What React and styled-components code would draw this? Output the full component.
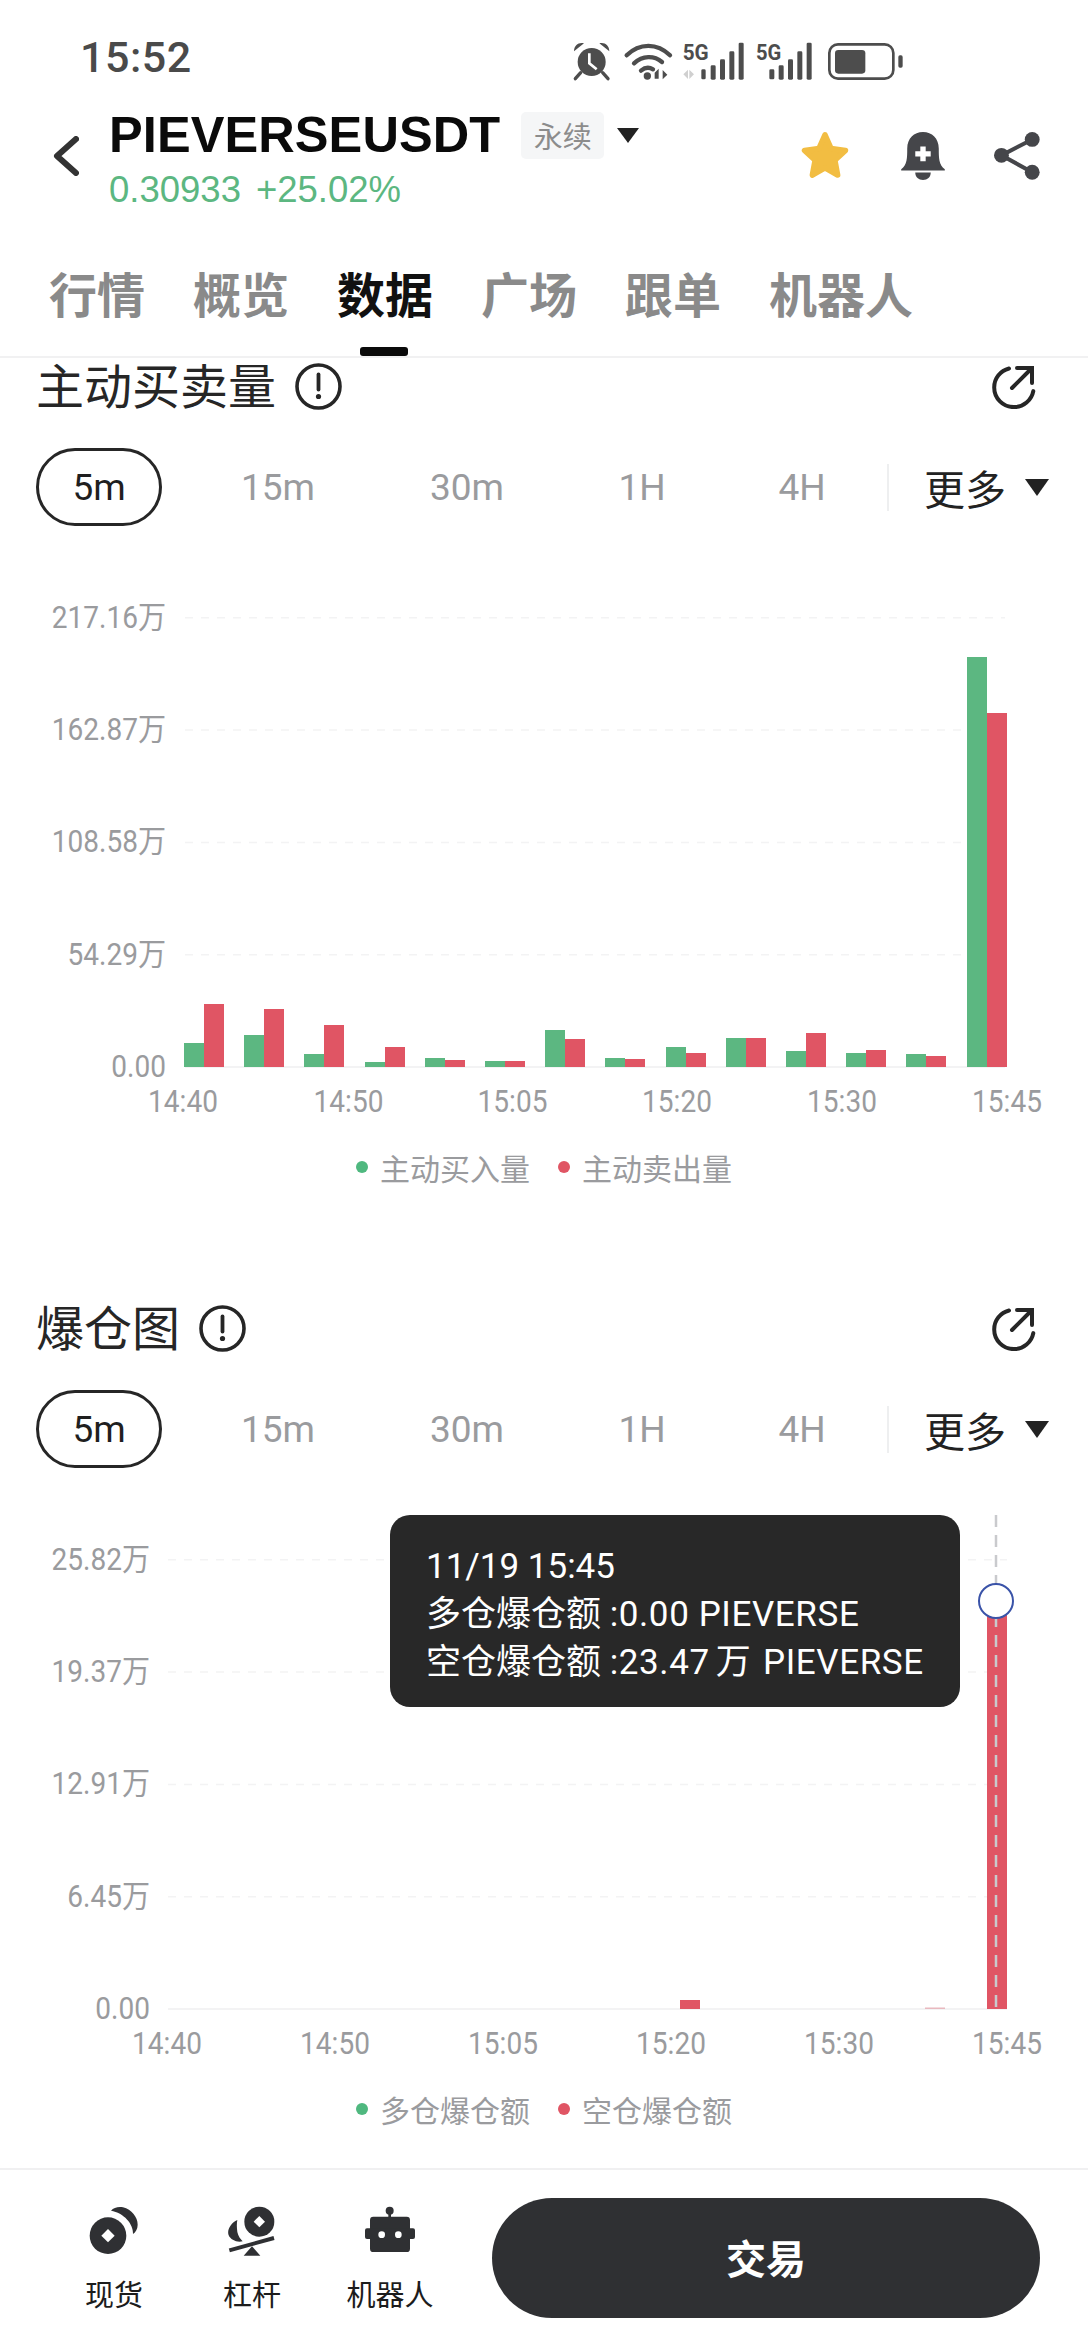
import React from 'react';
import styled, { createGlobalStyle } from 'styled-components';

const GREEN = '#5cb781';
const RED = '#e05564';
const LATIN = 'Roboto, "Noto Sans CJK SC", sans-serif';

const Global = createGlobalStyle`
  html, body { margin: 0; padding: 0; background: #fff; }
  body { font-family: ${LATIN}; }
  * { box-sizing: border-box; }
`;

const Page = styled.div`
  width: 1088px; height: 2348px; display: flex; flex-direction: column;
  overflow: hidden; background: #fff; color: #222;
`;

const StatusBar = styled.div`
  height: 112px; flex: none; display: flex; align-items: center; justify-content: space-between;
  padding: 0 148px 0 80px;
`;
const Clock = styled.span`
  font: 500 43px/1 Roboto, sans-serif; color: #4a4a4a; letter-spacing: 0.5px; padding-top: 2px;
`;

const Header = styled.div`
  height: 128px; flex: none; display: flex; align-items: flex-start; padding: 0 48px 0 53px;
`;
const BackWrap = styled.div`
  width: 56px; height: 88px; flex: none; display: flex; align-items: center;
`;
const TitleBlock = styled.div`
  display: flex; flex-direction: column; flex: 1; gap: 11px;
`;
const TitleLine = styled.div`
  display: flex; align-items: center; height: 48px; margin-top: -1px;
`;
const Symbol = styled.h1`
  margin: 0; font: 700 50.5px/48px "Liberation Sans", sans-serif; color: #0a0a0a; letter-spacing: 0.1px;
`;
const Badge = styled.span`
  margin-left: 21px; width: 83px; height: 47px; background: #f5f6f7; border-radius: 5px;
  display: flex; align-items: center; justify-content: center;
  font: 400 29px/1 "Noto Sans CJK SC", sans-serif; color: #8c8c8c;
`;
const Caret = styled.span`
  margin-left: ${p => p.$ml || 13}px; width: 0; height: 0; flex: none;
  border-left: ${p => p.$w || 11}px solid transparent; border-right: ${p => p.$w || 11}px solid transparent;
  border-top: ${p => p.$h || 15}px solid #222;
`;
const Price = styled.div`
  font: 400 36.5px/40px "Liberation Sans", sans-serif; color: ${GREEN}; display: flex; gap: 15px;
`;
const Actions = styled.div`
  display: flex; align-items: center; gap: 49px; height: 88px;
`;

const Tabs = styled.nav`
  height: 118px; flex: none; display: flex; gap: 48px; padding: 27px 0 0 49px;
  border-bottom: 2px solid #f1f1f2;
`;
const Tab = styled.div`
  position: relative; height: 89px;
  font: 700 48px/50px "Noto Sans CJK SC", sans-serif; color: ${p => (p.$active ? '#111' : '#8a8a8a')};
  ${p => p.$active && `
    &::after {
      content: ''; position: absolute; left: 23px; width: 48px; height: 9px; bottom: 0;
      border-radius: 3px; background: #0a0a0a;
    }
  `}
`;

const Content = styled.main`
  flex: 1; min-height: 0; padding-top: 5px;
`;
const Section = styled.section`
  margin-bottom: ${p => p.$mb || 0}px;
`;
const SectionHead = styled.div`
  height: 47px; display: flex; align-items: center; padding: 0 52px 0 36px;
`;
const SectionTitle = styled.h2`
  margin: 0; padding-bottom: 6px; font: 400 48px/47px "Noto Sans CJK SC", sans-serif; color: #262626;
`;
const InfoWrap = styled.span`
  margin-left: 19px; display: flex; flex: 1;
`;
const Periods = styled.div`
  margin-top: 38px; height: 78px; display: flex; align-items: center; padding: 0 0 0 36px;
`;
const Period = styled.div`
  flex: none; width: ${p => p.$w}px; height: 78px; display: flex; align-items: center; justify-content: center;
  font: 400 37px/1 ${LATIN}; color: ${p => (p.$active ? '#1f1f1f' : '#9a9b9e')};
  ${p => p.$active && 'border: 3px solid #262626; border-radius: 39px;'}
`;
const MoreDivider = styled.span`
  width: 2px; height: 47px; background: #eeeff0; margin: 0 35px 0 27px; flex: none;
`;
const More = styled.div`
  flex: none; white-space: nowrap;
  font: 400 41px/1 "Noto Sans CJK SC", sans-serif; color: #222; display: flex; align-items: center;
`;

const ChartWrap = styled.div`
  position: relative; height: 690px;
`;
const ChartSvg = styled.svg`
  display: block; width: 1088px; height: 690px;
  text { font-family: ${LATIN}; }
`;
const Tooltip = styled.div`
  position: absolute; left: 390px; top: 47px; width: 570px; height: 192px; border-radius: 20px;
  background: #282828; color: #fff; padding: 28px 0 0 36px;
  font: 400 35px/48px ${LATIN};
  white-space: nowrap;
`;
const TipValue = styled.span`
  letter-spacing: 0.6px;
`;
const TipUnit = styled.span`
  margin: 0 3px 0 6px; letter-spacing: 0;
`;

const Legend = styled.div`
  position: absolute; left: 0; right: 0; top: 623px; height: 36px; display: flex; justify-content: center;
  align-items: center;
`;
const LegendItem = styled.div`
  display: flex; align-items: center; gap: 12px; margin-left: ${p => p.$ml || 0}px;
  font: 400 30px/36px "Noto Sans CJK SC", sans-serif; color: #9a9b9e;
`;
const Dot = styled.span`
  width: 12px; height: 12px; border-radius: 50%; background: ${p => p.$c};
`;

const Footer = styled.footer`
  height: 180px; flex: none; border-top: 2px solid #f0f0f1; display: flex; align-items: flex-start;
  padding: 28px 48px 0 45px; background: #fff;
`;
const FootItem = styled.div`
  width: 138px; flex: none; height: 120px; display: flex; flex-direction: column; align-items: center;
  padding-top: 8px; gap: 22px;
  font: 400 29px/30px "Noto Sans CJK SC", sans-serif; color: #1c1c1c;
`;
const TradeBtn = styled.button`
  margin-left: 33px; flex: 1; height: 120px; border: 0; border-radius: 60px; background: #2f3033; color: #fff;
  font: 700 40px/1 "Noto Sans CJK SC", sans-serif; display: flex; align-items: center; justify-content: center;
  padding: 0 0 2px;
`;

/* ---------- icons ---------- */
const StatusIcons = () => (
  <svg width="400" height="60" viewBox="0 0 1200 180" fill="#4d4d4d">
    <circle cx="155" cy="108" r="42" />
    <path d="M148 82v30l22 18" fill="none" stroke="#fff" strokeWidth="8" />
    <path d="M102 76c0-18 14-28 30-24zM208 76c0-18-14-28-30-24z" />
    <path d="M122 140l-16 18M188 140l16 18" stroke="#4d4d4d" strokeWidth="10" strokeLinecap="round" />
    <g fill="none" stroke="#4d4d4d" strokeWidth="13" strokeLinecap="round">
      <path d="M260 88c38-38 92-38 130 0" />
      <path d="M282 112c26-24 60-24 84-4" />
      <path d="M303 134c12-10 26-10 36-4" />
    </g>
    <circle cx="322" cy="150" r="11" />
    <path d="M344 158v-18l12-12v30zM362 128l0 30M368 132l14 14-14 14z" />
    <text x="428" y="101" fontFamily="Roboto, sans-serif" fontWeight="700" fontSize="66" textLength="78" lengthAdjust="spacingAndGlyphs">5G</text>
    <path d="M430 145l14-14v28zM448 131l14 14-14 14z" fill="#d0d0d0" />
    <rect x="484" y="130" width="13" height="30" rx="4" />
    <rect x="512" y="118" width="15" height="43" rx="4" />
    <rect x="540" y="100" width="15" height="61" rx="4" />
    <rect x="568" y="76" width="15" height="85" rx="4" />
    <rect x="596" y="50" width="15" height="111" rx="4" />
    <text x="648" y="101" fontFamily="Roboto, sans-serif" fontWeight="700" fontSize="66" textLength="76" lengthAdjust="spacingAndGlyphs">5G</text>
    <rect x="688" y="130" width="15" height="30" rx="4" />
    <rect x="716" y="118" width="15" height="43" rx="4" />
    <rect x="744" y="100" width="15" height="61" rx="4" />
    <rect x="772" y="76" width="15" height="85" rx="4" />
    <rect x="800" y="50" width="15" height="111" rx="4" />
    <rect x="868" y="55" width="192" height="103" rx="26" fill="none" stroke="#4d4d4d" strokeWidth="8" />
    <rect x="885" y="72" width="91" height="71" rx="10" />
    <rect x="1075" y="88" width="13" height="37" rx="5" />
  </svg>
);

const Back = () => (
  <svg width="26" height="40" viewBox="0 0 26 40" fill="none">
    <path d="M23 3L4 20l19 17" stroke="#333" strokeWidth="6" strokeLinecap="round" strokeLinejoin="round" />
  </svg>
);

const Star = () => (
  <svg width="54" height="52" viewBox="-76 -78 152 150">
    <polygon
      points="0,-64 17.6,-24.3 59,-19.2 28.5,9.3 36.4,52 0,31 -36.4,52 -28.5,9.3 -59,-19.2 -17.6,-24.3"
      fill="#f2bd42" stroke="#f2bd42" strokeWidth="16" strokeLinejoin="round"
    />
  </svg>
);

const Bell = () => (
  <svg width="44" height="48" viewBox="355 65 130 143">
    <path d="M355 176c18-14 18-34 18-62 0-30 20-49 47-49s47 19 47 49c0 28 0 48 18 62v4H355z" fill="#45464a" />
    <path d="M397 186h46c0 14-10 22-23 22s-23-8-23-22z" fill="#45464a" />
    <path d="M412 108h16v14h15v16h-15v14h-16v-14h-15v-16h15z" fill="#fff" />
  </svg>
);

const Share = () => (
  <svg width="46" height="48" viewBox="640 66 136 142" fill="#45464a">
    <path d="M753 88l-91 47 91 50" fill="none" stroke="#45464a" strokeWidth="12" />
    <circle cx="753" cy="88" r="22" />
    <circle cx="662" cy="135" r="22" />
    <circle cx="753" cy="185" r="22" />
  </svg>
);

const Info = () => (
  <svg width="47" height="47" viewBox="0 0 47 47" fill="none">
    <circle cx="23.5" cy="23.5" r="21.5" stroke="#262626" strokeWidth="3.6" />
    <path d="M23.5 11.5v15" stroke="#262626" strokeWidth="3.8" strokeLinecap="round" />
    <circle cx="23.5" cy="33.5" r="2.6" fill="#262626" />
  </svg>
);

const ExportIcon = () => (
  <svg width="44" height="44" viewBox="0 0 44 44" fill="none" stroke="#262626" strokeWidth="4" strokeLinecap="round">
    <path d="M17 3.5C8.5 5.6 2.2 13.2 2.2 22.4c0 10.9 8.8 19.7 19.7 19.7 9.6 0 17.7-6.9 19.4-16" />
    <path d="M20 23L39 4M25 3h15v15" strokeLinejoin="miter" />
  </svg>
);

const CoinIcon = () => (
  <svg width="50" height="50" viewBox="118 54 150 150" fill="#2f3033">
    <circle cx="175" cy="143" r="55" />
    <path d="M175 123l20 20-20 20-20-20z" fill="#fff" />
    <path d="M184 68c8-9 22-13 36-10 26 6 44 30 44 52 0 12-6 23-14 28 2-30-28-64-66-70z" />
  </svg>
);

const LeverIcon = () => (
  <svg width="50" height="50" viewBox="535 54 150 150" fill="#2f3033">
    <circle cx="632" cy="101" r="45" />
    <path d="M632 84l17 17-17 17-17-17z" fill="#fff" />
    <path d="M566 96c-20 8-32 32-26 46 6 14 24 22 42 18 -6-6-14-16-16-28-2-14-2-26 0-36z" />
    <path d="M542 187l134-37" stroke="#2f3033" strokeWidth="12" />
    <path d="M585 203l25-28 25 28z" />
  </svg>
);

const RobotIcon = () => (
  <svg width="50" height="50" viewBox="945 48 150 150" fill="#2f3033">
    <circle cx="1019" cy="62" r="12" />
    <rect x="1015" y="66" width="8" height="20" />
    <rect x="960" y="80" width="120" height="106" rx="10" />
    <rect x="945" y="115" width="150" height="32" rx="6" />
    <circle cx="995" cy="134" r="10" fill="#fff" />
    <circle cx="1045" cy="134" r="10" fill="#fff" />
  </svg>
);

/* ---------- chart ---------- */
const BASE = 541;
const STEP = 112.3;

const AxisText = ({ x, y, anchor, children }) => (
  <text transform={`translate(${x} ${y}) scale(0.92 1)`} textAnchor={anchor} fontSize="30.5" fill="#9a9b9e">
    {children}
  </text>
);

const Chart = ({ yLabels, yRight, gridLeft, gridRight, xLabels, bars, children, tooltip, legend }) => (
  <ChartWrap>
    <ChartSvg viewBox="0 0 1088 690">
      {yLabels.map((l, i) => {
        const y = BASE - i * STEP;
        return (
          <g key={l}>
            <line x1={gridLeft} x2={gridRight} y1={y} y2={y} stroke="#f3f3f4" strokeWidth={i === 0 ? 2 : 1.5}
              strokeDasharray={i === 0 ? undefined : '8 8'} />
            <AxisText x={yRight} y={y + 10} anchor="end">{l}</AxisText>
          </g>
        );
      })}
      {bars.map(b => (
        <rect key={b.x + b.c} x={b.x} y={BASE - b.h} width={20} height={b.h} fill={b.c} />
      ))}
      {xLabels.map(([t, x]) => (
        <AxisText key={t} x={x} y={BASE + 45} anchor="middle">{t}</AxisText>
      ))}
      {children}
    </ChartSvg>
    {tooltip}
    {legend}
  </ChartWrap>
);

const greens = [24, 32, 13, 5, 9, 6, 37, 9, 20, 29, 16, 14, 13, 410];
const reds = [63, 58, 42, 20, 7, 6, 28, 8, 14, 29, 34, 17, 11, 354];
const volumeBars = greens.flatMap((g, i) => {
  const x = Math.round(184 + 60.2 * i);
  return [
    { x, h: g, c: GREEN },
    { x: x + 20, h: reds[i], c: RED },
  ];
});

const xs1 = ['14:40', '14:50', '15:05', '15:20', '15:30', '15:45'];
const xPos1 = [183, 348.5, 512.5, 677, 842, 1007];
const xPos2 = [167, 335, 503, 671, 839, 1007];

const PeriodRow = () => (
  <Periods>
    <Period $active $w={126}>5m</Period>
    <Period $w={232}>15m</Period>
    <Period $w={146}>30m</Period>
    <Period $w={204}>1H</Period>
    <Period $w={116}>4H</Period>
    <MoreDivider />
    <More>更多<Caret $ml={19} $w={12} $h={17} /></More>
  </Periods>
);

const Head = ({ title }) => (
  <SectionHead>
    <SectionTitle>{title}</SectionTitle>
    <InfoWrap><Info /></InfoWrap>
    <ExportIcon />
  </SectionHead>
);

const ChartLegend = ({ a, b }) => (
  <Legend>
    <LegendItem><Dot $c="#4fb87f" />{a}</LegendItem>
    <LegendItem $ml={28}><Dot $c={RED} />{b}</LegendItem>
  </Legend>
);

export default function App() {
  return (
    <Page>
      <Global />
      <StatusBar>
        <Clock>15:52</Clock>
        <StatusIcons />
      </StatusBar>
      <Header>
        <BackWrap><Back /></BackWrap>
        <TitleBlock>
          <TitleLine>
            <Symbol>PIEVERSEUSDT</Symbol>
            <Badge>永续</Badge>
            <Caret />
          </TitleLine>
          <Price><span>0.30933</span><span>+25.02%</span></Price>
        </TitleBlock>
        <Actions>
          <Star />
          <Bell />
          <Share />
        </Actions>
      </Header>
      <Tabs>
        <Tab>行情</Tab>
        <Tab>概览</Tab>
        <Tab $active>数据</Tab>
        <Tab>广场</Tab>
        <Tab>跟单</Tab>
        <Tab>机器人</Tab>
      </Tabs>
      <Content>
        <Section $mb={89}>
          <Head title="主动买卖量" />
          <PeriodRow />
          <Chart
            yLabels={['0.00', '54.29万', '108.58万', '162.87万', '217.16万']}
            yRight={166} gridLeft={185} gridRight={1005}
            xLabels={xs1.map((t, i) => [t, xPos1[i]])}
            bars={volumeBars}
            legend={<ChartLegend a="主动买入量" b="主动卖出量" />}
          />
        </Section>
        <Section>
          <Head title="爆仓图" />
          <PeriodRow />
          <Chart
            yLabels={['0.00', '6.45万', '12.91万', '19.37万', '25.82万']}
            yRight={150} gridLeft={168} gridRight={1007}
            xLabels={xs1.map((t, i) => [t, xPos2[i]])}
            bars={[
              { x: 680, h: 9, c: RED },
              { x: 925, h: 1.5, c: '#e9b9bf' },
              { x: 987, h: 408, c: RED },
            ]}
            tooltip={
              <Tooltip>
                <div>11/19 15:45</div>
                <div>多仓爆仓额 <TipValue>:0.00 PIEVERSE</TipValue></div>
                <div>空仓爆仓额 <TipValue>:23.47<TipUnit>万</TipUnit> PIEVERSE</TipValue></div>
              </Tooltip>
            }
            legend={<ChartLegend a="多仓爆仓额" b="空仓爆仓额" />}
          >
            <line x1="996" x2="996" y1="47" y2="541" stroke="#c9cacd" strokeWidth="2.5" strokeDasharray="12 8" />
            <circle cx="996" cy="133" r="17" fill="#fff" stroke="#3a53a8" strokeWidth="2" />
          </Chart>
        </Section>
      </Content>
      <Footer>
        <FootItem><CoinIcon />现货</FootItem>
        <FootItem><LeverIcon />杠杆</FootItem>
        <FootItem><RobotIcon />机器人</FootItem>
        <TradeBtn>交易</TradeBtn>
      </Footer>
    </Page>
  );
}
